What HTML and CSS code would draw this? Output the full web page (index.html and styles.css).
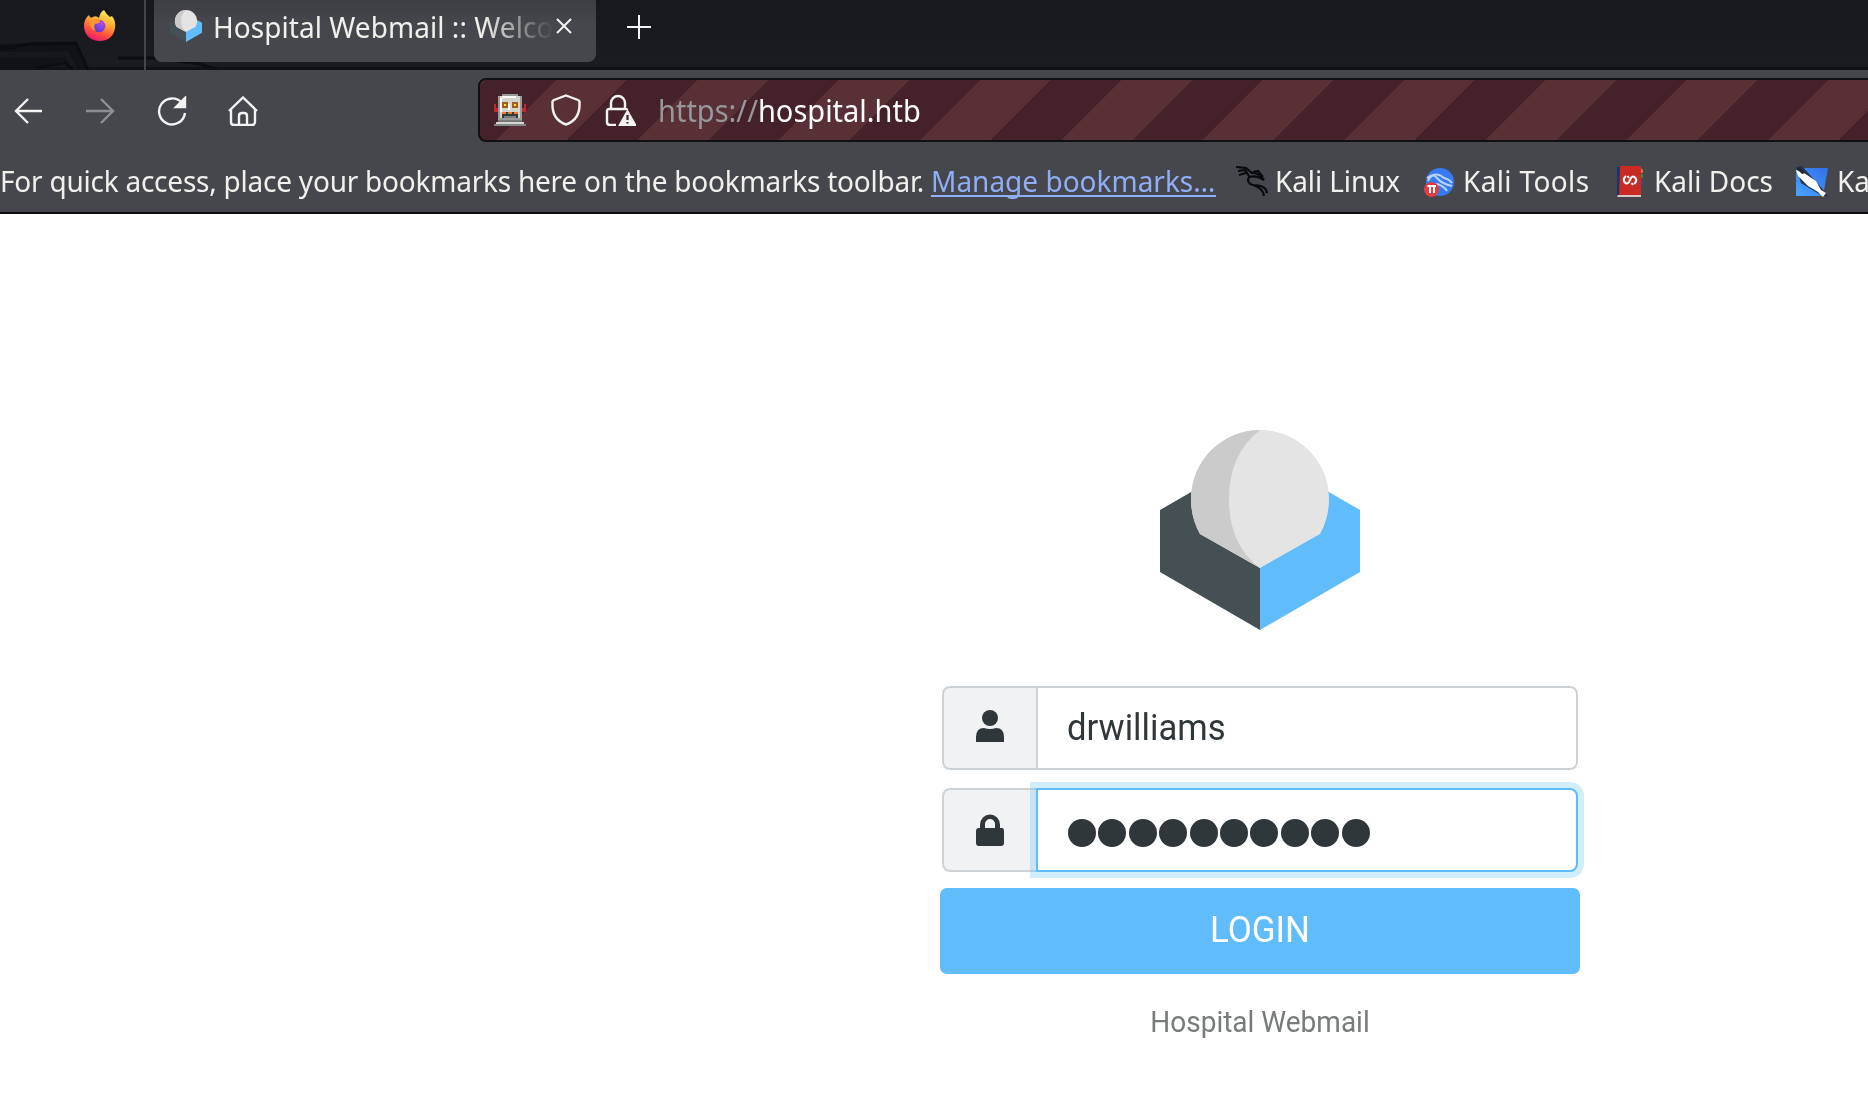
FILE: index.html
```html
<!DOCTYPE html>
<html lang="en">
<head>
<meta charset="utf-8">
<title>Hospital Webmail :: Welcome</title>
<link rel="stylesheet" href="styles.css">
</head>
<body>
<header class="chrome">
  <div class="tabstrip">
    <svg class="theme-art" width="240" height="70" viewBox="0 0 240 70" fill="none">
      <path d="M0 44 50 42H76L88 70H68L62 61 36 70H0Z" fill="#111216"/>
      <path d="M0 55 66 54 75 70" stroke="#17181c" stroke-width="6"/>
      <path d="M0 49 30 44 76 43 88 70M35 68 66 63 73 70M118 58H154L200 64 218 70" stroke="#0c0d10" stroke-width="3"/>
    </svg>
    <div class="pinned">
      <svg width="32" height="32" viewBox="0 0 32 32">
        <defs>
          <linearGradient id="ff" x1=".75" y1="0" x2=".35" y2="1"><stop offset="0" stop-color="#fff36a"/><stop offset=".4" stop-color="#ffac30"/><stop offset=".7" stop-color="#ff5639"/><stop offset="1" stop-color="#e8196f"/></linearGradient>
          <radialGradient id="globe" cx=".7" cy=".3" r=".8"><stop offset="0" stop-color="#b34af2"/><stop offset="1" stop-color="#553bc9"/></radialGradient>
        </defs>
        <path d="M5 5Q6 9 9 7Q12 5 15 8Q16 2 20 0Q22 4 26 7L28 6Q32 11 31 18C30 26 24 31 16 31C7 31 0 25 0 16Q0 9 5 5Z" fill="url(#ff)"/>
        <circle cx="15" cy="16" r="6.3" fill="url(#globe)"/>
        <path d="M5 11Q9 7 14 10Q18 9 15 13L11 14Q9 18 12 21Q6 19 5 11Z" fill="#ff9730"/>
      </svg>
    </div>
    <div class="tab">
      <svg width="32" height="32" viewBox="0 0 200 200"><use href="#cube"/></svg>
      <div class="tab-title"><span class="ui">Hospital Webmail :: Welco</span></div>
      <svg class="close" width="16" height="16" viewBox="0 0 16 16"><path d="M1 1 15 15M15 1 1 15"/></svg>
    </div>
    <svg class="plus" width="26" height="26" viewBox="0 0 26 26"><path d="M1 13H25M13 1V25"/></svg>
  </div>

  <nav class="toolbar">
    <div class="nav-buttons">
      <svg width="30" height="30" viewBox="0 0 30 30"><path d="M29 15H3M15 3 3 15 15 27"/></svg>
      <svg class="disabled" width="30" height="30" viewBox="0 0 30 30"><path d="M1 15H28M16 3 28 15 16 27"/></svg>
      <svg width="30" height="30" viewBox="0 0 30 30"><path d="M25 7A13 13 0 1 0 28 17"/><path d="M28 2V11H19Z" fill="#f3f3f3"/></svg>
      <svg class="home" width="30" height="30" viewBox="0 0 30 30"><path d="M1 15 15 1.500 29 15M3 13V26Q3 29 6 29H24Q27 29 27 26V13M11 29V20Q11 17 14 17H16Q19 17 19 20V29"/></svg>
    </div>
    <div class="urlbar">
      <svg width="32" height="32" viewBox="0 0 16 16" shape-rendering="crispEdges">
        <path d="M3 1H4V0H12V1H13V1H14V13H2V1Z" fill="#9b9c99"/><path d="M3 1H13V12H3Z" fill="#d3d5cf"/><path d="M4 1H11V2H4V9H3V2H4Z" fill="#fff"/>
        <path d="M0 5H1V7H2V9H0ZM15 5H16V9H14V7H15Z" fill="#c52832"/>
        <path d="M4 4H7V7H4ZM9 4H12V7H9Z" fill="#a65a1b"/><path d="M5 5H6V6H5ZM10 5H11V6H10Z" fill="#ffe83d"/>
        <path d="M7 5H8V8H7Z" fill="#fff"/><path d="M4 9H12V12H4Z" fill="#333b3d"/><path d="M4 9H6V10H4ZM7 9H9V10H7ZM10 9H12V10H10Z" fill="#f37830"/><path d="M5 11H11V12H5Z" fill="#7c807d"/>
        <path d="M2 13H14V14H2Z" fill="#777974"/><path d="M1 14H15V15H1Z" fill="#d3d5cf"/><path d="M0 15H16V16H0Z" fill="#858783"/>
      </svg>
      <svg class="shield" width="32" height="32" viewBox="0 0 32 32"><path d="M16 1.500 28 6Q30 7 29.500 9C30 19 26 27 16 30.500C6 27 2 19 2.500 9Q2 7 4 6Z"/></svg>
      <svg class="lock" width="32" height="32" viewBox="0 0 32 32"><path d="M7 15V9A7 7 0 0 1 21 9V15M23 16Q23 15 21 15H5Q3 15 3 17V28Q3 31 6 31H12"/><path d="M23.500 17.500 31 31H16Z" fill="#f3f3f3"/><path d="M23.500 21V26M23.500 28V29.500" stroke="#45222a" stroke-width="2.200"/></svg>
      <div class="url"><span class="ui"><span class="scheme">https://</span>hospital.htb</span></div>
    </div>
  </nav>

  <div class="bookmarks">
    <div class="hint"><span class="ui">For quick access, place your bookmarks here on the bookmarks toolbar.</span></div>
    <a class="manage"><span class="ui">Manage bookmarks…</span></a>
    <div class="bookmark linux">
      <svg width="32" height="32" viewBox="0 0 32 32" fill="none" stroke="#090a0b"><path d="M0 1 10 2 16 7Q22 6 28 14Q20 9 13 11Q10 17 17 19Q30 19 31 27M17 19Q27 22 28 30M2 5 9 4 13 10M3 9 10 7M17 6 22 5 27 11" stroke-width="2.200"/></svg>
      <span class="ui">Kali Linux</span>
    </div>
    <div class="bookmark tools">
      <svg width="32" height="32" viewBox="0 0 32 32"><circle cx="16" cy="16" r="14" fill="#377bf2"/><path d="M3 12Q13 5 20 12Q25 13 28 17M4 15Q8 6 13 12Q18 18 28 20M12 18Q19 19 23 25" fill="none" stroke="#b9d1fb" stroke-width="2"/><circle cx="7.500" cy="23.500" r="7.500" fill="#df3e40"/><path d="M3.500 20H12M6 20V27M10 20V27" stroke="#fff" stroke-width="2"/></svg>
      <span class="ui">Kali Tools</span>
    </div>
    <div class="bookmark docs">
      <svg width="26" height="32" viewBox="0 0 26 32"><path d="M0 1H3V29H0Z" fill="#17336f"/><path d="M3 0H24V29H2Z" fill="#c92b24"/><path d="M24 2 26 4V7H24Z" fill="#dc7430"/><path d="M24 8H26V12H24Z" fill="#398747"/><path d="M24 15H26V19H24Z" fill="#424b91"/><path d="M1 29H24V31H0Z" fill="#d5c8c7"/><path d="M9 10Q5.500 13 7.500 16Q10 19 12 16L14 12Q16 9 18.500 12Q20.500 15 17 18M10.500 10 12 12M14.500 17 16 19" fill="none" stroke="#fff" stroke-width="2"/></svg>
      <span class="ui">Kali Docs</span>
    </div>
    <div class="bookmark forums">
      <svg width="32" height="32" viewBox="0 0 32 32"><defs><linearGradient id="sea" x1="1" y1="0" x2="0" y2="1"><stop stop-color="#316fe8"/><stop offset="1" stop-color="#49a4ff"/></linearGradient></defs><path d="M2 2H32L27 30H0V5Z" fill="url(#sea)"/><path d="M0 1 6 0 30 27 32 31 23 28 5 17Z" fill="#25334a"/><path d="M0 4 8 7 20 15 25 24 30 27 27 31 22 26 12 20 2 10Z" fill="#fff"/><path d="M3 1 9 7 6 8 1 3Z" fill="#23262a"/></svg>
      <span class="ui">Kali Forums</span>
    </div>
  </div>
</header>

<main class="page">
  <form class="login">
    <svg class="logo" width="200" height="200" viewBox="0 0 200 200">
      <g id="cube">
        <path d="M0 80 45 54V90L100 138V200L0 142Z" fill="#445053"/>
        <path d="M200 80 155 54V90L100 138V200L200 142Z" fill="#60bcfb"/>
        <path d="M100 0A69 69 0 0 1 169 69Q169 88 160 104L100 138 40 104Q31 88 31 69A69 69 0 0 1 100 0Z" fill="#e4e4e4"/>
        <path d="M100 0A69 69 0 0 0 31 69Q31 88 40 104L100 138Q69 115 69 69Q69 24 100 0Z" fill="#cbcbcb"/>
      </g>
    </svg>
    <div class="field">
      <div class="addon"><svg width="28" height="32" viewBox="0 0 28 32"><circle cx="14" cy="8" r="8"/><path d="M0 32V27Q0 18 8 18Q14 20 20 18Q28 18 28 27V32Z"/></svg></div>
      <div class="input"><span>drwilliams</span></div>
    </div>
    <div class="field password">
      <div class="addon"><svg width="28" height="32" viewBox="0 0 28 32"><path d="M4 14V11A10 10.500 0 0 1 24 11V14H26Q28 14 28 17V29Q28 32 25 32H3Q0 32 0 29V17Q0 14 3 14ZM9 14H19V10A5 5 0 0 0 9 10Z" fill-rule="evenodd"/></svg></div>
      <div class="input focused"><i></i><i></i><i></i><i></i><i></i><i></i><i></i><i></i><i></i><i></i></div>
    </div>
    <div class="submit"><span>LOGIN</span></div>
    <div class="product"><span>Hospital Webmail</span></div>
  </form>
</main>
</body>
</html>
```
FILE: styles.css
```css
* { box-sizing: border-box; }
body { margin: 0; width: 1868px; height: 1110px; overflow: hidden; background: #fff; font-family: Roboto, sans-serif; }
svg { display: block; flex: none; }
.chrome { height: 214px; overflow: hidden; background: #46474c; border-bottom: 2px solid #0c0c12; color: #f0f0ec; font-family: "Noto Sans", sans-serif; font-size: 28px; line-height: 36px; white-space: nowrap; }
.ui { display: inline-block; transform: scaleY(1.04); transform-origin: 0 29px; }

.tabstrip { position: relative; height: 70px; display: flex; background: linear-gradient(#17181d, #1b1c21 66px, #101115 68px); }
.theme-art { position: absolute; left: 0; top: 0; }
.pinned { position: relative; width: 146px; height: 70px; padding: 10px 0 0 84px; border-right: 2px solid #45464b; }
.tab { position: relative; width: 442px; height: 62px; margin-left: 8px; padding: 10px 24px 0 16px; display: flex; background: linear-gradient(#3d3e43, #46474c 24px); border-radius: 0 0 8px 8px; }
.tab-title { flex: none; width: 340px; margin: -1px 0 0 11px; overflow: hidden; letter-spacing: .05px; -webkit-mask-image: linear-gradient(90deg, #000 270px, transparent 340px); mask-image: linear-gradient(90deg, #000 270px, transparent 340px); }
.close { margin: 8px 0 0 3px; }
.close, .plus { fill: none; stroke: #f3f3f3; stroke-width: 2; }
.plus { margin: 14px 0 0 30px; }

.toolbar { height: 80px; display: flex; align-items: flex-start; padding-top: 8px; }
.nav-buttons { flex: none; width: 478px; display: flex; gap: 42px; padding: 18px 0 0 13px; fill: none; stroke: #f3f3f3; stroke-width: 2.400; }
.disabled { opacity: .42; }
.home { margin-left: -1px; }
.urlbar { flex: none; width: 1400px; height: 64px; display: flex; padding: 14px 0 0 14px; border: 2px solid #101015; border-radius: 8px; background: repeating-linear-gradient(135deg, #583036 -46.200px 3.800px, #45222a 3.800px 53.750px); }
.shield, .lock { fill: none; stroke: #f3f3f3; stroke-width: 2.400; }
.shield { margin-left: 24px; }
.lock { margin-left: 22px; }
.url { margin: -1px 0 0 22px; color: #fff; font-size: 29px; }
.scheme { color: #98979c; }

.bookmarks { display: flex; padding-top: 13px; }
.hint { flex: none; width: 931px; letter-spacing: -.23px; }
.manage { flex: none; width: 285px; height: 34px; color: #8faef5; border-bottom: 2px solid #8fb0ff; }
.bookmark { flex: none; display: flex; }
.bookmark svg { margin-top: 3px; }
.bookmark .ui { margin-left: 7px; }
.linux { width: 188px; margin-left: 20px; letter-spacing: -.1px; }
.tools { width: 193px; letter-spacing: .35px; }
.docs { width: 179px; }
.docs .ui { margin-left: 11px; }
.forums .ui { margin-left: 9px; }

.page { display: flex; padding: 216px 0 0 940px; }
.login { width: 640px; display: flex; flex-direction: column; align-items: center; }
.logo { margin-bottom: 56px; }
.field { width: 636px; height: 84px; display: flex; color: #2f373a; }
.addon { width: 96px; display: flex; justify-content: center; align-items: center; padding-bottom: 4px; background: #f1f2f4; border: 2px solid #cdd2d7; border-radius: 8px 0 0 8px; fill: #2f373a; }
.input { flex: 1; margin-left: -2px; padding: 0 0 2px 29px; display: flex; align-items: center; background: #fff; border: 2px solid #cdd2d7; border-radius: 0 8px 8px 0; font-size: 34.700px; }
.input span { transform: scaleY(1.05); }
.password { margin-top: 18px; }
.password .addon { padding: 0; }
.focused { padding: 6px 0 0 30px; gap: 2.400px; border-color: #5fbbfb; box-shadow: 0 0 0 6px rgba(86, 191, 247, .27); }
.focused i { width: 28px; height: 28px; border-radius: 50%; background: #2f373a; }
.submit { width: 640px; height: 86px; margin-top: 16px; padding-bottom: 2px; display: flex; justify-content: center; align-items: center; background: #60bcfb; border-radius: 7px; color: #fff; font-size: 35px; }
.submit span { transform: scaleY(1.04); }
.product { margin-top: 30px; color: #777b7c; font-size: 28px; line-height: 36px; }
.product span { display: inline-block; transform: scaleY(1.06); }
```
